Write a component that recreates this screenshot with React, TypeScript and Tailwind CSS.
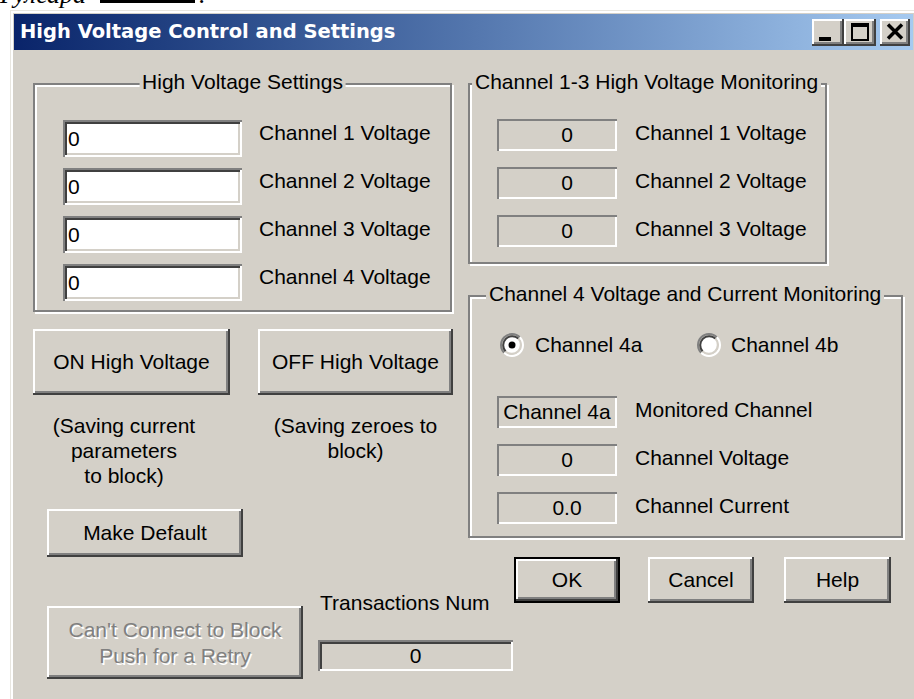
import React from 'react';

// classic 3D bevels
const raised =
  'bg-[#d4d0c8] shadow-[inset_-2px_-2px_0_#404040,inset_2px_2px_0_#ffffff,inset_-4px_-4px_0_#808080]';
const raisedDefault =
  'bg-[#d4d0c8] shadow-[inset_0_0_0_2px_#000000,inset_-4px_-4px_0_#404040,inset_4px_4px_0_#ffffff,inset_-6px_-6px_0_#808080]';
const sunken =
  'shadow-[inset_2px_2px_0_#808080,inset_-2px_-2px_0_#ffffff,inset_4px_4px_0_#404040,inset_-4px_-4px_0_#d4d0c8]';
const thinSunken = 'shadow-[inset_2px_2px_0_#808080,inset_-2px_-2px_0_#ffffff]';

interface ButtonProps {
  children: React.ReactNode;
  className?: string;
  disabled?: boolean;
  isDefault?: boolean;
}

const Button: React.FC<ButtonProps> = ({ children, className = '', disabled, isDefault }) => (
  <button
    disabled={disabled}
    className={`${isDefault ? raisedDefault : raised} shrink-0 text-center ${
      disabled ? 'text-[#808080] [text-shadow:1.5px_1.5px_0_#ffffff]' : 'text-black'
    } ${className}`}
  >
    {children}
  </button>
);

interface GroupBoxProps {
  title: string;
  legendClass: string;
  className?: string;
  children: React.ReactNode;
}

// etched frame with the caption sitting on the top edge
const GroupBox: React.FC<GroupBoxProps> = ({ title, legendClass, className = '', children }) => (
  <div
    className={`relative border-2 border-[#808080] shadow-[inset_2px_2px_0_#ffffff,2px_2px_0_#ffffff] ${className}`}
  >
    <span
      className={`absolute -top-[16px] whitespace-nowrap bg-[#d4d0c8] px-[3px] leading-[25px] ${legendClass}`}
    >
      {title}
    </span>
    {children}
  </div>
);

const Readout: React.FC<{ value: string; className?: string }> = ({ value, className = '' }) => (
  <div className={`flex h-[32px] w-[120px] shrink-0 items-center justify-center ${thinSunken} ${className}`}>
    {value}
  </div>
);

const Radio: React.FC<{ checked?: boolean }> = ({ checked }) => (
  <svg width="24" height="24" viewBox="0 0 24 24" className="shrink-0">
    <circle cx="12" cy="12" r="9" fill="#ffffff" />
    <path d="M4.22 19.78A11 11 0 0 1 19.78 4.22" fill="none" stroke="#808080" strokeWidth="2" />
    <path d="M19.78 4.22A11 11 0 0 1 4.22 19.78" fill="none" stroke="#ffffff" strokeWidth="2" />
    <path d="M5.64 18.36A9 9 0 0 1 18.36 5.64" fill="none" stroke="#404040" strokeWidth="2" />
    <path d="M18.36 5.64A9 9 0 0 1 5.64 18.36" fill="none" stroke="#d4d0c8" strokeWidth="2" />
    {checked && <circle cx="12" cy="12" r="3.5" fill="#000000" />}
  </svg>
);

const TitleBar: React.FC = () => (
  <div className="flex h-[36px] items-center bg-linear-to-r from-[#0a246a] to-[#a6caf0] pl-[6px] pr-[3px]">
    <span className="whitespace-nowrap [font-family:'DejaVu_Sans',Verdana,sans-serif] text-[19.5px] leading-none font-bold text-white">
      High Voltage Control and Settings
    </span>
    <div className="ml-auto flex">
      <button className={`${raised} flex h-[27px] w-[32px] items-end pb-[5px] pl-[7px]`}>
        <span className="h-[4px] w-[12px] bg-black" />
      </button>
      <button className={`${raised} flex h-[27px] w-[32px] items-center justify-center pb-[1px]`}>
        <span className="h-[18px] w-[18px] border-2 border-t-4 border-black" />
      </button>
      <button className={`${raised} ml-[4px] flex h-[27px] w-[30px] items-center justify-center pb-[1px]`}>
        <svg width="18" height="17" viewBox="0 0 18 17">
          <path d="M2 1.5L16 15.5M16 1.5L2 15.5" stroke="#000000" strokeWidth="3.5" />
        </svg>
      </button>
    </div>
  </div>
);

const SettingsColumn: React.FC = () => (
  <div className="w-[420px] shrink-0">
    <GroupBox
      title="High Voltage Settings"
      legendClass="left-1/2 -translate-x-1/2"
      className="w-[419px] pt-[35px] pb-[9px] pl-[28px]"
    >
      <div className="flex flex-col gap-[11px]">
        {[1, 2, 3, 4].map((n) => (
          <div key={n} className="flex items-start">
            <input
              type="text"
              defaultValue="0"
              className={`h-[37px] w-[179px] bg-white pl-[5px] outline-none ${sunken}`}
            />
            <span className="ml-[17px] leading-[25px] whitespace-nowrap">Channel {n} Voltage</span>
          </div>
        ))}
      </div>
    </GroupBox>

    <div className="mt-[17px] flex gap-[28px]">
      <Button className="h-[66px] w-[197px]">ON High Voltage</Button>
      <Button className="h-[66px] w-[195px]">OFF High Voltage</Button>
    </div>

    <div className="mt-[18px] flex leading-[25px]">
      <p className="w-[182px] text-center">
        (Saving current
        <br />
        parameters
        <br />
        to block)
      </p>
      <p className="ml-[43px] w-[195px] text-center">
        (Saving zeroes to
        <br />
        block)
      </p>
    </div>

    <Button className="mt-[21px] ml-[14px] h-[48px] w-[196px]">Make Default</Button>

    <div className="mt-[33px] flex items-start">
      <Button disabled className="mt-[16px] ml-[14px] h-[73px] w-[256px] leading-[26px]">
        Can&apos;t Connect to Block
        <br />
        Push for a Retry
      </Button>
      <div className="ml-[15px] shrink-0">
        <div className="pl-[2px] leading-[25px] whitespace-nowrap">Transactions Num</div>
        <div className={`mt-[25px] flex h-[31px] w-[195px] items-center justify-center ${sunken}`}>0</div>
      </div>
    </div>
  </div>
);

const MonitorColumn: React.FC = () => (
  <div className="w-[435px] shrink-0">
    <GroupBox
      title="Channel 1-3 High Voltage Monitoring"
      legendClass="left-[2px]"
      className="w-[359px] pt-[34px] pb-[15px] pl-[27px]"
    >
      <div className="flex flex-col gap-[16px]">
        {[1, 2, 3].map((n) => (
          <div key={n} className="flex items-start">
            <Readout value="0" className="pl-[20px]" />
            <span className="mt-[1px] ml-[18px] leading-[25px] whitespace-nowrap">Channel {n} Voltage</span>
          </div>
        ))}
      </div>
    </GroupBox>

    <GroupBox
      title="Channel 4 Voltage and Current Monitoring"
      legendClass="left-[16px]"
      className="mt-[31px] w-[435px] pt-[36px] pb-[12px] pl-[27px]"
    >
      <div className="ml-[3px] flex h-[24px] items-center">
        <label className="flex w-[197px] items-center">
          <Radio checked />
          <span className="ml-[11px] whitespace-nowrap">Channel 4a</span>
        </label>
        <label className="flex items-center">
          <Radio />
          <span className="ml-[10px] whitespace-nowrap">Channel 4b</span>
        </label>
      </div>

      <div className="mt-[39px] flex flex-col gap-[16px]">
        {[
          { value: 'Channel 4a', label: 'Monitored Channel', pad: '' },
          { value: '0', label: 'Channel Voltage', pad: 'pl-[20px]' },
          { value: '0.0', label: 'Channel Current', pad: 'pl-[20px]' },
        ].map((row) => (
          <div key={row.label} className="flex items-start">
            <Readout value={row.value} className={`whitespace-nowrap ${row.pad}`} />
            <span className="mt-[1px] ml-[18px] leading-[25px] whitespace-nowrap">{row.label}</span>
          </div>
        ))}
      </div>
    </GroupBox>

    <div className="mt-[19px] flex pl-[46px]">
      <Button isDefault className="h-[46px] w-[106px]">OK</Button>
      <Button className="ml-[28px] h-[46px] w-[106px]">Cancel</Button>
      <Button className="ml-[30px] h-[46px] w-[107px]">Help</Button>
    </div>
  </div>
);

const App: React.FC = () => {
  return (
    <div className="relative h-[699px] w-[914px] overflow-hidden bg-white [font-family:'Liberation_Sans',Arial,sans-serif] text-[21px] text-black">
      {/* tail of the document line above the window */}
      <div className="h-[10px] overflow-hidden">
        <div className="-mt-[19px] flex items-start whitespace-nowrap [font-family:'Liberation_Serif','Times_New_Roman',serif] text-[26px] leading-[28px] italic">
          <span>Гулсара</span>
          <span className="mt-[19px] ml-[14px] h-[3px] w-[95px] bg-black" />
          <span className="ml-[4px]">.</span>
        </div>
      </div>

      <div className="ml-[10px] min-h-[700px] w-[907px] bg-[#d4d0c8] p-[4px] shadow-[inset_1px_1px_0_#e8e6e0,inset_3px_3px_0_#ffffff]">
        <TitleBar />
        <div className="flex gap-[15px] pt-[33px] pl-[19px]">
          <SettingsColumn />
          <MonitorColumn />
        </div>
      </div>
    </div>
  );
};

export default App;
